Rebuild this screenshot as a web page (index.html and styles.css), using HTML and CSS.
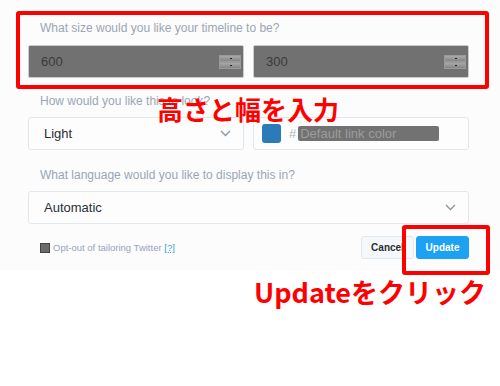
FILE: index.html
```html
<!DOCTYPE html>
<html>
<head>
<meta charset="utf-8">
<link rel="stylesheet" href="styles.css">
</head>
<body>
<div class="page">
  <div class="panel">
    <div class="label">What size would you like your timeline to be?</div>
    <div class="row">
      <div class="num"><span>600</span><span class="spin"><i></i><i></i></span></div>
      <div class="num"><span>300</span><span class="spin"><i></i><i></i></span></div>
    </div>
    <div class="label l2">How would you like this to look?</div>
    <div class="row">
      <div class="sel"><span>Light</span>
        <svg class="chev" width="11" height="7" viewBox="0 0 11 7"><path d="M1 1 L5.5 5.5 L10 1" fill="none" stroke="#8899a6" stroke-width="1.4"/></svg>
      </div>
      <div class="sel color">
        <span class="swatch"></span>
        <span class="hash">#</span>
        <span class="ph">Default link color</span>
      </div>
    </div>
    <div class="label l3">What language would you like to display this in?</div>
    <div class="sel wide"><span>Automatic</span>
      <svg class="chev" width="11" height="7" viewBox="0 0 11 7"><path d="M1 1 L5.5 5.5 L10 1" fill="none" stroke="#8899a6" stroke-width="1.4"/></svg>
    </div>
    <div class="footer">
      <div class="opt"><span class="check"></span><span>Opt-out of tailoring Twitter <a class="help">[?]</a></span></div>
      <div class="btns">
        <button class="btn cancel">Cancel</button>
        <button class="btn update">Update</button>
      </div>
    </div>
  </div>
  <div class="mark box1"></div>
  <div class="mark box2"></div>
  <div class="note n1">高さと幅を入力</div>
  <div class="note n2">Updateをクリック</div>
</div>
</body>
</html>
```
FILE: styles.css
```css
html, body {
  margin: 0;
  padding: 0;
  background: #ffffff;
}
.page {
  position: relative;
  width: 500px;
  height: 386px;
  overflow: hidden;
  font-family: "Liberation Sans", Arial, sans-serif;
}
.panel {
  background: #fcfcfc;
  padding: 20px 31px 0 28px;
  height: 250px;
}
.label {
  font-size: 12px;
  line-height: 16px;
  color: #9aa6b4;
  padding-left: 12px;
  margin-bottom: 9px;
}
.label.l2 {
  margin-top: 15px;
  margin-bottom: 8px;
}
.label.l3 {
  margin-top: 17px;
  margin-bottom: 8px;
}
.row {
  display: grid;
  grid-template-columns: 216px 216px;
  column-gap: 9px;
}
.num {
  height: 33px;
  box-sizing: border-box;
  background: #717171;
  border: 1px solid #c9cbcd;
  border-radius: 2px;
  display: flex;
  align-items: center;
  justify-content: space-between;
  padding: 0 2px 0 12px;
  font-size: 13px;
  color: #3a3a3a;
}
.spin {
  display: flex;
  flex-direction: column;
  width: 22px;
}
.spin i {
  display: block;
  height: 5px;
  border: 1px solid #9a9a9a;
  background: linear-gradient(#a9a9a9, #858585);
  position: relative;
}
.spin i::after {
  content: "";
  position: absolute;
  left: 10px;
  top: 2px;
  width: 2px;
  height: 1px;
  background: #222;
}
.sel {
  height: 33px;
  box-sizing: border-box;
  background: #fdfdfe;
  border: 1px solid #e1e8ed;
  border-radius: 3px;
  display: flex;
  align-items: center;
  justify-content: space-between;
  padding: 0 12px 0 15px;
  font-size: 13px;
  color: #292f33;
}
.sel.color {
  justify-content: flex-start;
  padding-left: 8px;
}
.sel.wide {
  padding-left: 15px;
}
.swatch {
  width: 19px;
  height: 19px;
  border-radius: 3px;
  background: #2b7bb9;
  margin-right: 8px;
}
.hash {
  color: #aab8c2;
  font-size: 13px;
  margin-right: 2px;
}
.ph {
  background: #727272;
  color: #9c9c9c;
  width: 141px;
  height: 15px;
  line-height: 15px;
  font-size: 13px;
  border-radius: 2px;
  padding-left: 2px;
  box-sizing: border-box;
}
.footer {
  margin-top: 12px;
  display: flex;
  justify-content: space-between;
  align-items: center;
}
.opt {
  padding-left: 12px;
  display: flex;
  align-items: center;
  font-size: 9.5px;
  color: #9aa0c6;
}
.check {
  width: 8px;
  height: 8px;
  border: 1px solid #444;
  background: #6b6b6b;
  margin-right: 3px;
}
.help {
  color: #3ba0e0;
  text-decoration: underline dotted;
}
.btns {
  display: flex;
  gap: 2px;
}
.btn {
  height: 23px;
  border-radius: 3px;
  font-family: "Liberation Sans", Arial, sans-serif;
  font-weight: bold;
  font-size: 10px;
  padding: 0;
  margin: 0;
}
.cancel {
  width: 53px;
  background: #f5f8fa;
  border: 1px solid #e1e8ed;
  color: #292f33;
}
.update {
  width: 53px;
  background: #1da1f2;
  border: 1px solid #1da1f2;
  color: #ffffff;
}
.mark {
  position: absolute;
  border: 4px solid #ff0000;
  border-radius: 3px;
  box-sizing: border-box;
}
.box1 {
  left: 16px;
  top: 11px;
  width: 473px;
  height: 78px;
}
.box2 {
  left: 402px;
  top: 225px;
  width: 88px;
  height: 50px;
}
.note {
  position: absolute;
  color: #ff0000;
  font-family: "Noto Sans CJK JP", "Noto Sans", sans-serif;
  font-weight: bold;
  white-space: nowrap;
}
.n1 {
  left: 157px;
  top: 92px;
  font-size: 26px;
  line-height: 34px;
}
.n2 {
  left: 254px;
  top: 274px;
  font-size: 27px;
  line-height: 36px;
}
```
